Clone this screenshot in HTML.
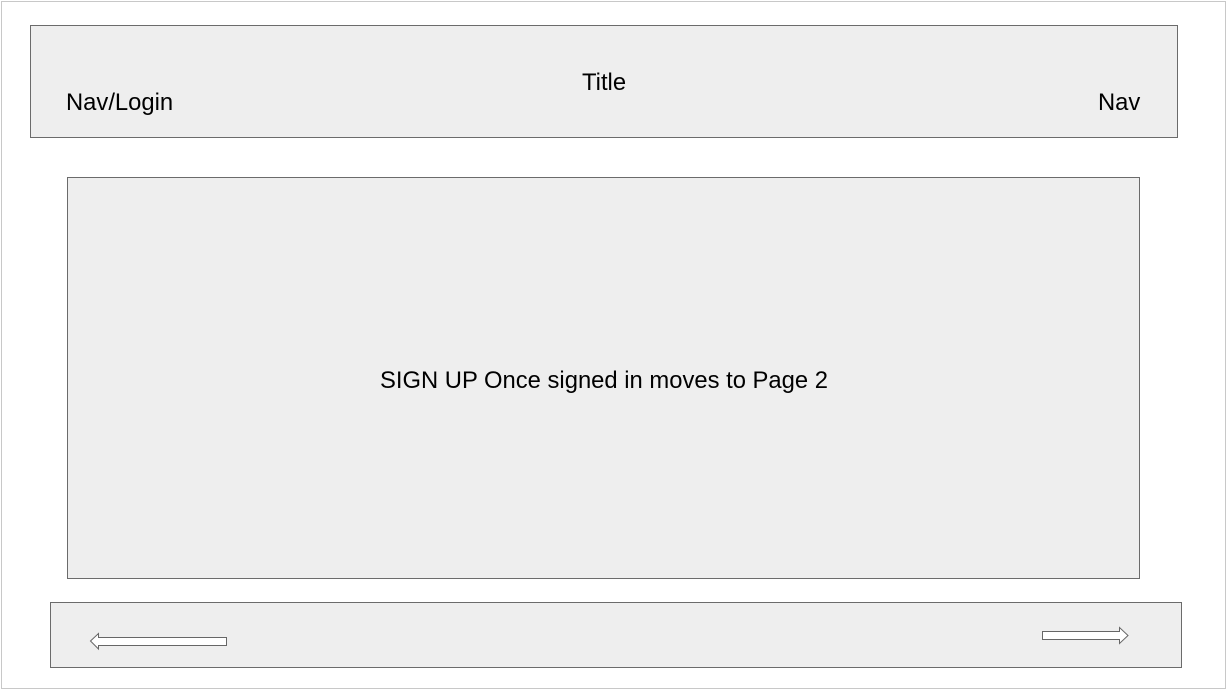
<!DOCTYPE html>
<html><head><style>
body{margin:0;width:1232px;height:690px;background:#fff;position:relative;overflow:hidden;font-family:"Liberation Sans",Arial,sans-serif;color:#000}
.b{position:absolute;background:#eeeeee;border:1.5px solid #6b6b6b;box-sizing:border-box}
.t{position:absolute;font-size:23.8px;white-space:nowrap;line-height:1}
</style></head><body>
<div style="position:absolute;left:1px;top:1px;width:1225px;height:688px;border:1px solid #c8c8c8;box-sizing:border-box"></div>
<div class="b" style="left:30px;top:25px;width:1148px;height:113px"></div>
<div class="b" style="left:67px;top:177px;width:1073px;height:402px"></div>
<div class="b" style="left:50px;top:602px;width:1132px;height:66px"></div>
<div class="t" style="left:582px;top:71px">Title</div>
<div class="t" style="left:66px;top:91px">Nav/Login</div>
<div class="t" style="left:1098px;top:91px">Nav</div>
<div class="t" style="left:380px;top:369px">SIGN UP Once signed in moves to Page 2</div>
<svg style="position:absolute;left:0;top:0" width="1232" height="690">
<path d="M90.5 641 L98.5 633.5 L98.5 637.5 L226.5 637.5 L226.5 645.5 L98.5 645.5 L98.5 649 Z" fill="#fff" stroke="#666" stroke-width="1"/>
<path d="M1042.5 631.5 L1119.5 631.5 L1119.5 627.5 L1128 635.5 L1119.5 643.5 L1119.5 639.5 L1042.5 639.5 Z" fill="#fff" stroke="#666" stroke-width="1"/>
</svg>
</body></html>
